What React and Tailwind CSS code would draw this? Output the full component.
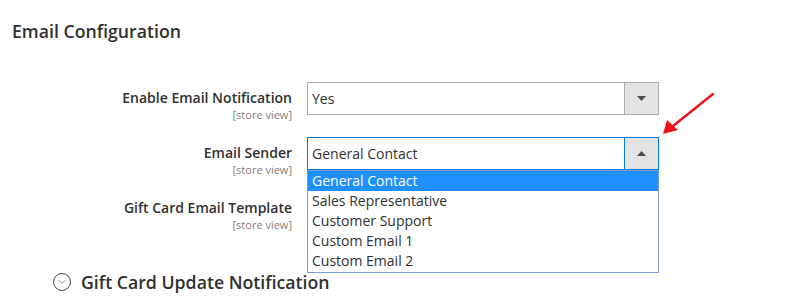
import { ChevronDown } from 'lucide-react';

const font = { fontFamily: '"Open Sans", "Noto Sans", sans-serif' };

const Triangle = ({ up }) => (
    <svg width="9" height="5" viewBox="0 0 9 5" className="block">
        {up ? <path d="M0 5 L4.5 0 L9 5 Z" fill="#514943" /> : <path d="M0 0 L9 0 L4.5 5 Z" fill="#514943" />}
    </svg>
);

const Select = ({ value, active, children }) => (
    <div
        className={`relative flex w-[352px] h-[33px] border bg-white ${active ? 'border-[#007bdb]' : 'border-[#adadad]'}`}
    >
        <div className="flex items-center flex-1 pl-[4px] text-[14px] text-[#303030]">{value}</div>
        <div
            className={`flex items-center justify-center w-[34px] h-full bg-[#e3e3e3] border-l ${active ? 'border-[#007bdb]' : 'border-[#adadad]'}`}
        >
            <Triangle up={active} />
        </div>
        {children}
    </div>
);

const FieldRow = ({ label, children }) => (
    <div className="flex items-start h-[33px]">
        <div className="w-[292px] text-right pt-[6px]">
            <div className="text-[14px] leading-[19px] font-semibold text-[#303030]">{label}</div>
            <div className="mt-[1px] text-[11px] leading-[13px] text-[#808080]">[store view]</div>
        </div>
        <div className="ml-[15px]">{children}</div>
    </div>
);

const options = ['General Contact', 'Sales Representative', 'Customer Support', 'Custom Email 1', 'Custom Email 2'];

export default function App() {
    return (
        <div className="relative w-[793px] h-[308px] overflow-hidden bg-white" style={font}>
            {/* Section title */}
            <div className="pt-[20px] pl-[12px] text-[17.7px] leading-[22px] font-semibold text-[#303030]">
                Email Configuration
            </div>

            {/* Fields */}
            <div className="flex flex-col gap-[22px] mt-[40px]">
                <FieldRow label="Enable Email Notification">
                    <Select value="Yes" />
                </FieldRow>
                <FieldRow label="Email Sender">
                    <Select value="General Contact" active>
                        <div className="absolute z-10 left-[-1px] top-[32px] w-[352px] border border-[#7a9cd8] bg-white pb-[1px]">
                            {options.map((opt, i) => (
                                <div
                                    key={opt}
                                    className={`h-[20px] pl-[4px] text-[14px] leading-[20px] ${i === 0 ? 'bg-[#1e90ff] text-white' : 'text-[#303030]'}`}
                                >
                                    {opt}
                                </div>
                            ))}
                        </div>
                    </Select>
                </FieldRow>
                <FieldRow label="Gift Card Email Template">
                    <Select value="" />
                </FieldRow>
            </div>

            {/* Collapsible section */}
            <div className="flex items-center h-[22px] mt-[46px] pl-[53px]">
                <div className="flex items-center justify-center w-[18px] h-[18px] rounded-full border border-[#514943]">
                    <ChevronDown size={12} strokeWidth={1.3} color="#514943" />
                </div>
                <div className="ml-[10px] text-[17.7px] leading-[22px] font-semibold text-[#303030]">
                    Gift Card Update Notification
                </div>
            </div>

            {/* Annotation arrow */}
            <svg className="absolute left-0 top-0" width="793" height="308">
                <line x1="713" y1="94" x2="673" y2="126" stroke="#e8161b" strokeWidth="2.5" strokeLinecap="round" />
                <path d="M663 134 L667 120 L678 130 Z" fill="#e8161b" />
            </svg>
        </div>
    );
}
